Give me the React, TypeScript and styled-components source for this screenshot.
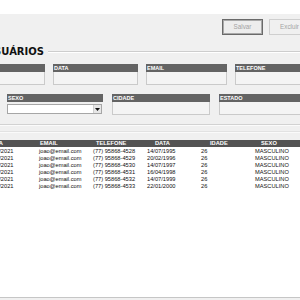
import React from "react";
import styled, { createGlobalStyle } from "styled-components";

const Global = createGlobalStyle`
  html, body { margin: 0; padding: 0; background: #f0f0f0; overflow: hidden; }
  body { font-family: "Liberation Sans", Arial, sans-serif; }
`;

const Screen = styled.div`
  width: 300px;
  height: 300px;
  overflow: hidden;
  background: #f0f0f0;
`;

const TopBand = styled.div`
  height: 14px;
  background: #ffffff;
`;

const Canvas = styled.div`
  width: 350px;
  margin-left: -30px;
`;

const Toolbar = styled.div`
  display: flex;
  justify-content: flex-end;
  gap: 6px;
  padding: 5px 10px 0 0;
`;

const Button = styled.button<{ $focused?: boolean }>`
  width: 41px;
  height: 16px;
  padding: 0;
  box-sizing: border-box;
  background: ${(p) => (p.$focused ? "#ededed" : "#f0f0f0")};
  border: 1px solid ${(p) => (p.$focused ? "#6a6a6a" : "#cfcfcf")};
  box-shadow: ${(p) => (p.$focused ? "inset 0 0 0 1px #a9a9a9" : "none")};
  color: #a3a3a3;
  font-family: "Liberation Sans", Arial, sans-serif;
  font-size: 6.3px;
  line-height: 14px;
  text-align: center;
`;

const GroupHeader = styled.div`
  display: flex;
  align-items: center;
  gap: 4px;
  height: 10px;
  margin-top: 12px;
  padding-left: 16px;
`;

const GroupTitle = styled.span`
  font-family: "DejaVu Sans", Verdana, sans-serif;
  font-weight: bold;
  font-size: 10px;
  line-height: 10px;
  color: #111;
  white-space: nowrap;
`;

const EtchedLine = styled.div`
  flex: 1;
  height: 0;
  border-top: 1px solid #cdcdcd;
  border-bottom: 1px solid #ffffff;
  margin-top: -1px;
`;

const FieldRow = styled.div<{ $cols: string; $gap: number; $indent: number; $top: number }>`
  display: grid;
  grid-template-columns: ${(p) => p.$cols};
  column-gap: ${(p) => p.$gap}px;
  padding-left: ${(p) => p.$indent}px;
  margin-top: ${(p) => p.$top}px;
`;

const Field = styled.div`
  display: flex;
  flex-direction: column;
`;

const FieldLabel = styled.div`
  height: 8px;
  background: #646464;
  color: #ffffff;
  font-family: "Liberation Sans", Arial, sans-serif;
  font-weight: bold;
  font-size: 5.5px;
  line-height: 8px;
  padding-left: 1px;
  white-space: nowrap;
  overflow: hidden;
`;

const FieldBox = styled.div`
  height: 13px;
  box-sizing: border-box;
  background: #f4f4f4;
  border: 1px solid #cacaca;
  border-top: none;
`;

const ComboWrap = styled.div`
  height: 13.5px;
  box-sizing: border-box;
  padding: 2px 1px 1px 0;
`;

const Combo = styled.div`
  height: 10px;
  box-sizing: border-box;
  display: flex;
  justify-content: flex-end;
  background: #ffffff;
  border: 1px solid #a6a6a6;
`;

const ComboArrow = styled.div`
  width: 7px;
  display: flex;
  align-items: center;
  justify-content: center;
  background: #e6e6e6;
  border-left: 1px solid #cfcfcf;
`;

const GroupBottom = styled.div`
  margin-top: 8px;
  border-top: 1px solid #d2d2d2;
  border-bottom: 1px solid #fbfbfb;
`;

const Divider = styled.div`
  margin-top: 5px;
  border-top: 1px solid #e2e2e2;
  border-bottom: 1px solid #fafafa;
`;

const Grid = styled.div`
  margin-top: 7px;
`;

const HeaderRow = styled.div`
  display: grid;
  grid-template-columns: repeat(6, 54px) 1fr;
  height: 7px;
  padding-left: 14px;
  background: #535353;
`;

const HeaderCell = styled.div<{ $indent: number }>`
  padding-left: ${(p) => p.$indent}px;
  color: #ffffff;
  font-family: "Liberation Sans", Arial, sans-serif;
  font-weight: bold;
  font-size: 5.7px;
  line-height: 7px;
  white-space: nowrap;
`;

const Body = styled.div`
  height: 151px;
  box-sizing: border-box;
  padding-top: 1px;
  background: #ffffff;
  border-bottom: 1px solid #c6c6c6;
`;

const DataRow = styled.div`
  display: grid;
  grid-template-columns: repeat(6, 54px) 1fr;
  height: 7px;
  padding-left: 14px;
`;

const DataCell = styled.div`
  padding-left: 1px;
  color: #111;
  font-family: "Liberation Sans", Arial, sans-serif;
  font-size: 5.7px;
  line-height: 7px;
  white-space: nowrap;
`;

const headers: [string, number][] = [
  ["DATA", 4],
  ["EMAIL", 2],
  ["TELEFONE", 4],
  ["DATA", 9],
  ["IDADE", 10],
  ["SEXO", 7],
];

const rows = [
  ["14/07/2021", "joao@email.com", "(77) 95868-4528", "14/07/1995", "26", "MASCULINO"],
  ["14/07/2021", "joao@email.com", "(77) 95868-4529", "20/02/1996", "26", "MASCULINO"],
  ["14/07/2021", "joao@email.com", "(77) 95868-4530", "14/07/1997", "26", "MASCULINO"],
  ["14/07/2021", "joao@email.com", "(77) 95868-4531", "16/04/1998", "26", "MASCULINO"],
  ["14/07/2021", "joao@email.com", "(77) 95868-4532", "14/07/1999", "26", "MASCULINO"],
  ["14/07/2021", "joao@email.com", "(77) 95868-4533", "22/01/2000", "26", "MASCULINO"],
];

export default function App() {
  return (
    <Screen>
      <Global />
      <TopBand />
      <Canvas>
        <Toolbar>
          <Button $focused>Salvar</Button>
          <Button>Excluir</Button>
        </Toolbar>
        <GroupHeader>
          <GroupTitle>USUÁRIOS</GroupTitle>
          <EtchedLine />
        </GroupHeader>
        <FieldRow $cols="75px 85px 81px 1fr" $gap={8} $indent={0} $top={7}>
          <Field>
            <FieldLabel>NOME</FieldLabel>
            <FieldBox />
          </Field>
          <Field>
            <FieldLabel>DATA</FieldLabel>
            <FieldBox />
          </Field>
          <Field>
            <FieldLabel>EMAIL</FieldLabel>
            <FieldBox />
          </Field>
          <Field>
            <FieldLabel>TELEFONE</FieldLabel>
            <FieldBox />
          </Field>
        </FieldRow>
        <FieldRow $cols="96px 98px 1fr" $gap={9} $indent={37} $top={9}>
          <Field>
            <FieldLabel>SEXO</FieldLabel>
            <ComboWrap>
              <Combo>
                <ComboArrow>
                  <svg width="5" height="3" viewBox="0 0 5 3">
                    <path d="M0 0 H5 L2.5 3 Z" fill="#111" />
                  </svg>
                </ComboArrow>
              </Combo>
            </ComboWrap>
          </Field>
          <Field>
            <FieldLabel>CIDADE</FieldLabel>
            <FieldBox />
          </Field>
          <Field>
            <FieldLabel>ESTADO</FieldLabel>
            <FieldBox />
          </Field>
        </FieldRow>
        <GroupBottom />
        <Divider />
        <Grid>
          <HeaderRow>
            {headers.map(([h, indent], i) => (
              <HeaderCell key={i} $indent={indent}>
                {h}
              </HeaderCell>
            ))}
            <HeaderCell $indent={0} />
          </HeaderRow>
          <Body>
            {rows.map((r, i) => (
              <DataRow key={i}>
                {r.map((c, j) => (
                  <DataCell key={j}>{c}</DataCell>
                ))}
              </DataRow>
            ))}
          </Body>
        </Grid>
      </Canvas>
    </Screen>
  );
}
